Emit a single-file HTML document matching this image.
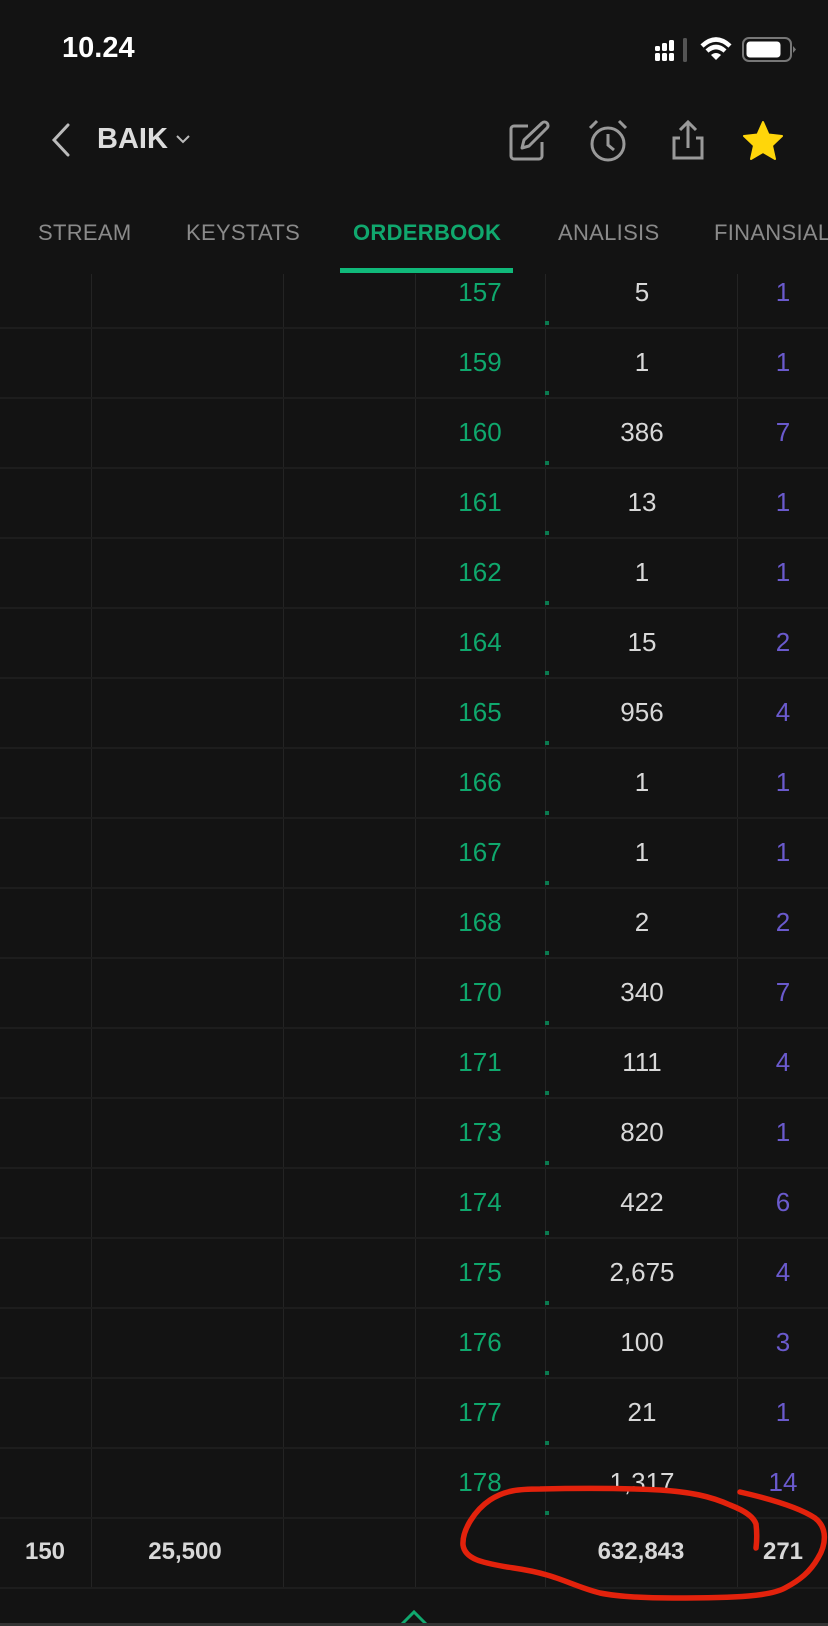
<!DOCTYPE html>
<html><head><meta charset="utf-8"><style>
*{margin:0;padding:0;box-sizing:border-box}
body{width:828px;height:1626px;background:#131313;font-family:"Liberation Sans",sans-serif;position:relative;overflow:hidden;color:#ddd}
.a{position:absolute}
.vl{position:absolute;top:274px;height:1314px;width:1px;background:#242424}
.hl{position:absolute;left:0;width:828px;height:2px;background:#1d1d1d}
.c{position:absolute;text-align:center;font-size:26px;line-height:30px}
.p{color:#0fa86d;left:430px;width:100px}
.v{color:#d8d8d8;left:580px;width:124px}
.n{color:#6a5acd;left:748px;width:70px}
.dot{position:absolute;left:545px;width:4px;height:4px;background:#0a7a50}
.tab{position:absolute;top:220px;font-size:22px;color:#8a8a8a;letter-spacing:0.3px}
.t{position:absolute;top:1537px;font-size:24px;font-weight:bold;color:#d8d8d8;text-align:center;line-height:30px}
</style></head><body>
<div class="a" style="left:62px;top:32px;font-size:29px;color:#fff;font-weight:bold">10.24</div>
<svg class="a" style="left:650px;top:34px" width="150" height="32" viewBox="650 34 150 32">
<g fill="#fff"><rect x="655" y="53" width="5" height="8" rx="1.5"/><rect x="662" y="53" width="5" height="8" rx="1.5"/><rect x="669" y="53" width="5" height="8" rx="1.5"/><rect x="655" y="46" width="5" height="5" rx="1.5"/><rect x="662" y="43" width="5" height="8" rx="1.5"/><rect x="669" y="40" width="5" height="11" rx="1.5"/></g>
<rect x="683" y="38" width="4" height="24" rx="1.5" fill="#555"/>
<path d="M702 46 Q716 33 730 46" stroke="#fff" stroke-width="4.5" fill="none"/><path d="M707 51 Q716 43 725 51" stroke="#fff" stroke-width="4.5" fill="none"/><path d="M711 55 L716 60 L721 55 Q716 51 711 55Z" fill="#fff"/>
<rect x="743" y="38" width="48" height="23" rx="6" fill="none" stroke="#777" stroke-width="2"/><rect x="746.5" y="41.5" width="34" height="16" rx="3.5" fill="#fff"/><path d="M793 46 L796 49.5 L793 53Z" fill="#777"/>
</svg>
<svg class="a" style="left:48px;top:122px" width="26" height="36"><path d="M20 3 L6 18 L20 33" stroke="#bbb" stroke-width="3" fill="none" stroke-linecap="round"/></svg>
<div class="a" style="left:97px;top:123px;font-size:29px;font-weight:bold;color:#ddd">BAIK</div>
<svg class="a" style="left:175px;top:134px" width="16" height="12"><path d="M2 2 L8 8 L14 2" stroke="#bbb" stroke-width="2" fill="none"/></svg>
<svg class="a" style="left:508px;top:120px" width="44" height="44" viewBox="0 0 44 44"><path d="M20 6 H6 a3 3 0 0 0 -3 3 V36 a3 3 0 0 0 3 3 H31 a3 3 0 0 0 3 -3 V22" stroke="#999" stroke-width="3" fill="none"/><path d="M14 28 L16 20 L34 3 a3 3 0 0 1 5 5 L21 26 Z" stroke="#999" stroke-width="3" fill="none" stroke-linejoin="round"/></svg>
<svg class="a" style="left:586px;top:118px" width="44" height="46" viewBox="0 0 44 46"><circle cx="22" cy="26" r="16" stroke="#999" stroke-width="3" fill="none"/><path d="M22 16 V27 L28 32" stroke="#999" stroke-width="3" fill="none"/><path d="M4 10 L11 3 M40 10 L33 3" stroke="#999" stroke-width="3"/></svg>
<svg class="a" style="left:668px;top:118px" width="40" height="46" viewBox="0 0 40 46"><path d="M12 20 H6 V40 H34 V20 H28" stroke="#999" stroke-width="3" fill="none"/><path d="M20 30 V4 M12 12 L20 4 L28 12" stroke="#999" stroke-width="3" fill="none"/></svg>
<svg class="a" style="left:741px;top:119px" width="44" height="44" viewBox="0 0 44 44"><path d="M22 3 L27.5 15.5 L41 17 L31 26.5 L34 40 L22 33 L10 40 L13 26.5 L3 17 L16.5 15.5Z" fill="#ffd60a" stroke="#ffd60a" stroke-width="2" stroke-linejoin="round"/></svg>
<div class="tab" style="left:38px">STREAM</div>
<div class="tab" style="left:186px">KEYSTATS</div>
<div class="tab" style="left:353px;color:#10a86e;font-weight:bold">ORDERBOOK</div>
<div class="tab" style="left:558px">ANALISIS</div>
<div class="tab" style="left:714px">FINANSIAL</div>
<div class="a" style="left:340px;top:268px;width:173px;height:5px;background:#10b97a"></div>
<div class="vl" style="left:91px"></div><div class="vl" style="left:283px"></div><div class="vl" style="left:415px"></div><div class="vl" style="left:545px"></div><div class="vl" style="left:737px"></div>
<div id="rows"></div>
<script>
var d=[["157","5","1"],["159","1","1"],["160","386","7"],["161","13","1"],["162","1","1"],["164","15","2"],["165","956","4"],["166","1","1"],["167","1","1"],["168","2","2"],["170","340","7"],["171","111","4"],["173","820","1"],["174","422","6"],["175","2,675","4"],["176","100","3"],["177","21","1"],["178","1,317","14"]];
var h="";
for(var i=0;i<d.length;i++){var cy=292+i*70;var y=cy-15;
h+='<div class="c p" style="top:'+y+'px">'+d[i][0]+'</div><div class="c v" style="top:'+y+'px">'+d[i][1]+'</div><div class="c n" style="top:'+y+'px">'+d[i][2]+'</div>';
h+='<div class="hl" style="top:'+(327+i*70)+'px"></div><div class="dot" style="top:'+(321+i*70)+'px"></div>';}
h+='<div class="hl" style="top:1587px"></div>';
document.getElementById("rows").innerHTML=h;
</script>
<div class="t" style="left:14px;width:62px">150</div>
<div class="t" style="left:120px;width:130px">25,500</div>
<div class="t" style="left:570px;width:142px">632,843</div>
<div class="t" style="left:748px;width:70px">271</div>
<svg class="a" style="left:0;top:0" width="828" height="1626"><path d="M740 1492 C775 1500 800 1508 815 1518 C828 1528 826 1545 818 1558 C810 1572 800 1580 785 1588 C770 1596 740 1598 673 1598 C640 1598 615 1596 600 1593 C580 1588 565 1580 547 1575 C530 1570 520 1569 507 1567 C485 1563 465 1560 463 1545 C462 1530 475 1510 490 1500 C505 1490 520 1489 540 1489 C580 1488 620 1488 660 1490 C690 1492 710 1496 730 1505 C748 1512 754 1518 756 1524 C757 1532 757 1540 756 1548" stroke="#e3220c" stroke-width="5.5" fill="none" stroke-linecap="round"/>
<path d="M402 1624 L414 1612 L426 1624" stroke="#10a86e" stroke-width="3" fill="none"/></svg>
<div class="a" style="left:0;top:1623px;width:828px;height:3px;background:#333"></div>
</body></html>
